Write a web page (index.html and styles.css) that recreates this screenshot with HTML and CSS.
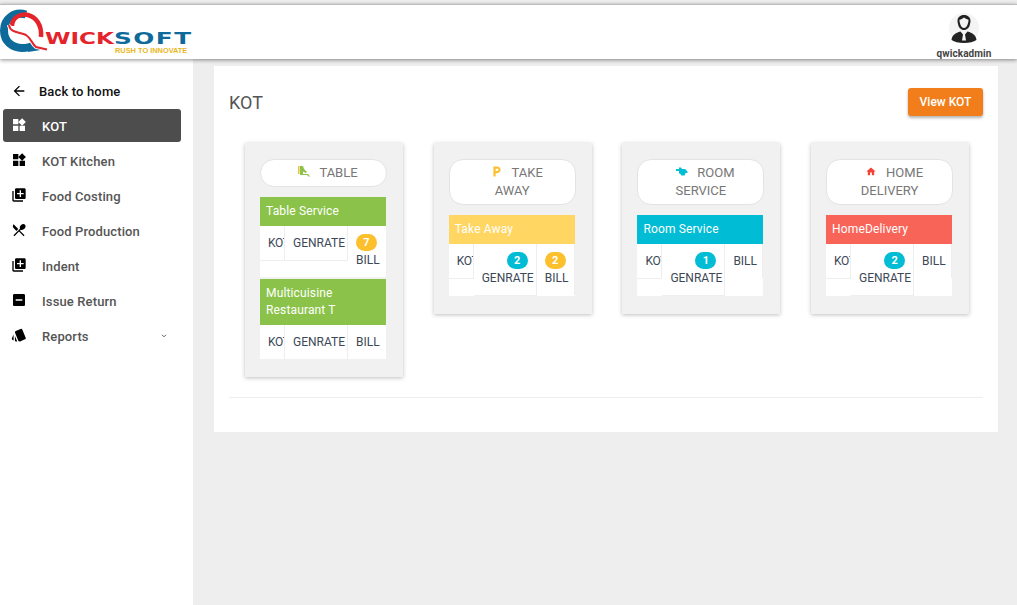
FILE: index.html
```html
<!DOCTYPE html>
<html lang="en">
<head>
<meta charset="utf-8">
<title>KOT</title>
<link rel="stylesheet" href="styles.css">
</head>
<body>
<header class="topbar">
  <div class="logo">
    <svg class="logo-q" viewBox="0 5 50 50" aria-hidden="true">
      <path d="M26 14.500C14 11 4 19 4 30.500C4 42 13 48 22 48C27 48 31 47 34 45" fill="none" stroke="#0e6a9a" stroke-width="8"/>
      <path d="M30 44L47 49L28 52z" fill="#0e6a9a"/>
      <path d="M12 26C12 18 20 13 28 15C36 17 42 25 41 37" fill="none" stroke="#e5232b" stroke-width="4.500"/>
      <path d="M9 25C10 33 20 32 26 35C31 38 32 44 36 47L47 49.500" fill="none" stroke="#fff" stroke-width="4"/>
      <path d="M9 25C10 33 20 32 26 35C31 38 32 44 36 47L47 49.500" fill="none" stroke="#e5232b" stroke-width="2"/>
    </svg>
    <div class="logo-words">
      <div class="logo-name"><span class="logo-wick">WICK</span><span class="logo-soft">SOFT</span></div>
      <div class="logo-tag">RUSH TO INNOVATE</div>
    </div>
  </div>
  <div class="user">
    <svg class="avatar" viewBox="0 0 30 30" aria-hidden="true">
      <circle cx="15" cy="15" r="15" fill="#f4f4f4"/>
      <path d="M15 2c-4 0-6.500 2.500-6.500 6 0 1 .2 2 .5 3 .5 3.500 3 6 6 6s5.500-2.500 6-6c.3-1 .5-2 .5-3 0-3.500-2.500-6-6.500-6zm0 2.500c2 1.500 3.500 2 4.500 2.200.1 2.800-1.500 8.300-4.500 8.300s-4.600-5.500-4.500-8.300c1.500-.2 3-1 4.500-2.200z" fill="#222"/>
      <path d="M2.500 27c.5-5 4-7 9-8.500l2.500 3-1 6h4l-1-6 2.500-3c5 1.500 8.500 3.500 9 8.500-3 2-7 3-12.500 3S5.500 29 2.500 27z" fill="#222"/>
    </svg>
    <div class="user-name">qwickadmin</div>
  </div>
</header>

<div class="layout">
  <aside class="sidebar">
    <a class="back">
      <svg class="ico" viewBox="0 0 24 24"><path d="M20 11H7.830l5.590-5.590L12 4l-8 8 8 8 1.410-1.410L7.830 13H20v-2z"/></svg>
      <span>Back to home</span>
    </a>
    <nav class="menu">
      <a class="item active">
        <svg class="ico" viewBox="0 0 24 24"><path d="M13 13v8h8v-8h-8zM3 21h8v-8H3v8zM3 3v8h8V3H3zm13.660-1.310L11 7.340 16.660 13l5.660-5.660-5.660-5.650z"/></svg>
        <span>KOT</span>
      </a>
      <a class="item">
        <svg class="ico" viewBox="0 0 24 24"><path d="M13 13v8h8v-8h-8zM3 21h8v-8H3v8zM3 3v8h8V3H3zm13.660-1.310L11 7.340 16.660 13l5.660-5.660-5.660-5.650z"/></svg>
        <span>KOT Kitchen</span>
      </a>
      <a class="item">
        <svg class="ico" viewBox="0 0 24 24"><path d="M4 6H2v14c0 1.100.9 2 2 2h14v-2H4V6zm16-4H8c-1.100 0-2 .9-2 2v12c0 1.100.9 2 2 2h12c1.100 0 2-.9 2-2V4c0-1.100-.9-2-2-2zm-1 9h-4v4h-2v-4H9V9h4V5h2v4h4v2z"/></svg>
        <span>Food Costing</span>
      </a>
      <a class="item">
        <svg class="ico" viewBox="0 0 24 24"><path d="M8.100 13.340l2.830-2.830L3.910 3.500c-1.560 1.560-1.560 4.090 0 5.660l4.190 4.180zm6.780-1.810c1.530.71 3.680.21 5.270-1.380 1.910-1.910 2.280-4.650.81-6.120-1.460-1.460-4.200-1.100-6.120.81-1.590 1.590-2.090 3.740-1.380 5.270L3.700 19.870l1.410 1.410L12 14.410l6.880 6.880 1.410-1.410L13.410 13l1.470-1.470z"/></svg>
        <span>Food Production</span>
      </a>
      <a class="item">
        <svg class="ico" viewBox="0 0 24 24"><path d="M4 6H2v14c0 1.100.9 2 2 2h14v-2H4V6zm16-4H8c-1.100 0-2 .9-2 2v12c0 1.100.9 2 2 2h12c1.100 0 2-.9 2-2V4c0-1.100-.9-2-2-2zm-1 9h-4v4h-2v-4H9V9h4V5h2v4h4v2z"/></svg>
        <span>Indent</span>
      </a>
      <a class="item">
        <svg class="ico" viewBox="0 0 24 24"><path d="M19 3H5c-1.100 0-2 .9-2 2v14c0 1.100.9 2 2 2h14c1.100 0 2-.9 2-2V5c0-1.100-.9-2-2-2zm-2 10H7v-2h10v2z"/></svg>
        <span>Issue Return</span>
      </a>
      <a class="item">
        <svg class="ico" viewBox="0 0 24 24"><path d="M2.530 19.650l1.340.56v-9.030l-2.430 5.860c-.41 1.020.08 2.190 1.090 2.610zm19.500-3.700L17.070 3.980c-.31-.75-1.040-1.210-1.810-1.230-.26 0-.53.04-.79.15L7.100 5.950c-.75.31-1.210 1.030-1.230 1.800-.01.27.04.54.15.8l4.960 11.970c.31.76 1.050 1.220 1.830 1.230.26 0 .52-.05.77-.15l7.360-3.050c1.020-.42 1.510-1.590 1.090-2.600zM5.880 19.750c0 1.100.9 2 2 2h1.450l-3.450-8.340v6.340z"/></svg>
        <span>Reports</span>
        <svg class="caret" viewBox="0 0 10 10"><path d="M2.500 3.500L5 6l2.500-2.500" fill="none" stroke="#555" stroke-width="1.200"/></svg>
      </a>
    </nav>
  </aside>

  <main class="content">
    <section class="panel">
      <div class="panel-head">
        <h1 class="title">KOT</h1>
        <button class="view-btn">View KOT</button>
      </div>
      <div class="cards">

        <article class="card">
          <div class="pill">
            <svg class="pill-ico" viewBox="0 0 12 11"><path d="M0 0h1.500v8H0z" fill="#e8c23a"/><path d="M2 0h3l1 3 3 3-1.200 1L5 5.500V8h5l2 2.500h-1.500L9 9H2z" fill="#8bc34a"/></svg>TABLE
          </div>
          <div class="service">
            <div class="service-head bg-green">Table Service</div>
            <div class="cells">
              <div class="cell kot">KOT</div>
              <div class="cell gen">GENRATE</div>
              <div class="cell bill plain"><span class="badge yellow">7</span>BILL</div>
            </div>
          </div>
          <div class="service">
            <div class="service-head bg-green">Multicuisine Restaurant T</div>
            <div class="cells">
              <div class="cell kot flat">KOT</div>
              <div class="cell gen flat">GENRATE</div>
              <div class="cell bill plain">BILL</div>
            </div>
          </div>
        </article>

        <article class="card">
          <div class="pill">
            <svg class="pill-ico" viewBox="4 2 17 20"><path fill="#fcc02d" d="M13 3H6v18h4v-6h3c3.310 0 6-2.690 6-6s-2.690-6-6-6zm.2 8H10V7h3.200c1.100 0 2 .9 2 2s-.9 2-2 2z"/></svg>TAKE AWAY
          </div>
          <div class="service">
            <div class="service-head bg-yellow">Take Away</div>
            <div class="cells">
              <div class="cell kot">KOT</div>
              <div class="cell gen"><span class="badge teal shift">2</span>GENRATE</div>
              <div class="cell bill"><span class="badge yellow">2</span>BILL</div>
            </div>
          </div>
        </article>

        <article class="card">
          <div class="pill">
            <svg class="pill-ico" viewBox="0 0 12 9"><path fill="#00bcd4" d="M0 2h3v2H0zM3 .5h2L6 2h3l2.500 2.500V6H9.500L8.500 8.500h-3L4 6.500H3z"/></svg>ROOM SERVICE
          </div>
          <div class="service">
            <div class="service-head bg-teal">Room Service</div>
            <div class="cells">
              <div class="cell kot">KOT</div>
              <div class="cell gen"><span class="badge teal shift">1</span>GENRATE</div>
              <div class="cell bill">BILL</div>
            </div>
          </div>
        </article>

        <article class="card">
          <div class="pill">
            <svg class="pill-ico" viewBox="0 0 24 24"><path fill="#f44336" d="M10 20v-6h4v6h5v-8h3L12 3 2 12h3v8z"/></svg>HOME DELIVERY
          </div>
          <div class="service">
            <div class="service-head bg-red">HomeDelivery</div>
            <div class="cells">
              <div class="cell kot">KOT</div>
              <div class="cell gen"><span class="badge teal shift">2</span>GENRATE</div>
              <div class="cell bill">BILL</div>
            </div>
          </div>
        </article>

      </div>
      <hr class="rule">
    </section>
  </main>
</div>
</body>
</html>
```
FILE: styles.css
```css
* { box-sizing: border-box; }
html, body { margin: 0; height: 100%; overflow: hidden; }
body { font-family: Roboto, "Liberation Sans", sans-serif; background: #eee; color: #3c4858; font-size: 12px; }

.topbar {
  height: 55px;
  margin-top: 4px;
  border-top: 1px solid #bdbdbd;
  background: #fff;
  box-shadow: 0 1px 4px rgba(0,0,0,.45);
  display: flex;
  justify-content: space-between;
  position: relative;
  z-index: 2;
}
.logo { display: flex; align-items: flex-start; }
.logo-q { width: 50px; height: 50px; flex: none; }
.logo-words { margin-left: -5px; margin-top: 25px; }
.logo-name { display: flex; font-family: "DejaVu Sans", sans-serif; font-weight: 700; font-size: 16.500px; line-height: 17px; }
.logo-wick { color: #e5232b; width: 69px; display: block; transform: scaleX(1.400); transform-origin: left; }
.logo-soft { color: #0e6a9a; display: block; letter-spacing: 1px; transform: scaleX(1.500); transform-origin: left; }
.logo-tag { font-family: "Liberation Sans", sans-serif; font-weight: 700; font-size: 7.400px; line-height: 8px; color: #e8b71c; margin-left: 70px; white-space: nowrap; }

.user { width: 60px; margin-right: 23px; display: flex; flex-direction: column; align-items: center; padding-top: 8px; }
.avatar { width: 30px; height: 30px; flex: none; }
.user-name { font-size: 10px; line-height: 12px; font-weight: 700; color: #444; margin-top: 5px; letter-spacing: .1px; white-space: nowrap; }

.layout { display: flex; height: 546px; }
.sidebar { width: 193px; background: #fff; padding: 18px 12px 0 3px; flex: none; }
.ico { width: 16px; height: 16px; fill: #000; flex: none; margin-top: -3px; }
.back { display: flex; align-items: center; height: 29px; padding-left: 8px; font-size: 13px; font-weight: 500; letter-spacing: .15px; color: #111; margin-bottom: 3px; }
.back span { margin-left: 12px; }
.back .ico { margin-top: -2px; }
.menu { display: flex; flex-direction: column; gap: 2px; }
.item { display: flex; align-items: center; height: 33px; padding: 1px 0 0 8px; border-radius: 3px; font-size: 13px; font-weight: 500; letter-spacing: .13px; color: #555; }
.item span { margin-left: 15px; }
.item.active { background: #4d4d4d; color: #fff; }
.item.active .ico { fill: #fff; }
.caret { width: 8px; height: 8px; margin-left: auto; margin-right: 13px; }

.content { flex: 1; padding: 7px 19px 0 21px; min-width: 0; }
.panel { background: #fff; height: 366px; padding: 0 15px; }
.panel-head { display: flex; justify-content: space-between; align-items: flex-start; padding-top: 22px; height: 77px; }
.title { font-size: 18px; line-height: 30px; font-weight: 400; color: #555; margin: 0; }
.view-btn { width: 75px; height: 28px; background: #f17e1a; color: #fff; border: 0; border-radius: 3px; font: 500 12px Roboto, sans-serif; box-shadow: 0 2px 3px rgba(0,0,0,.3); padding: 0; }

.cards { display: grid; grid-template-columns: repeat(4, 188.700px); align-items: start; padding-left: 1px; height: 254px; margin-right: -10px; }
.card { width: 158px; margin-left: 15px; background: #f1f1f1; padding: 16px 15px 18px; box-shadow: 0 1px 4px rgba(0,0,0,.25); }
.pill { background: #fff; border: 1px solid #e3e3e3; border-radius: 14px; text-align: center; font-size: 13px; line-height: 18px; color: #777; padding: 4px 14px; margin-bottom: 10px; width: 127px; }
.pill-ico { width: 12px; height: 11px; margin: 0 9px 0 9px; vertical-align: 0; }

.service { margin-bottom: 2px; width: 126px; background: #fff; }
.service:last-child { margin-bottom: 0; }
.service-head { color: #fff; font-size: 12px; font-weight: 400; letter-spacing: .15px; line-height: 17px; padding: 6px; }
.bg-green { background: #8bc34a; }
.bg-yellow { background: #ffd662; }
.bg-teal { background: #00bcd4; }
.bg-red { background: #f96459; }
.cells { display: flex; align-items: flex-start; }
.cell { padding: 8px; line-height: 18px; border-right: 1px solid #eee; border-bottom: 1px solid #eee; flex: none; }
.kot { width: 25px; overflow: hidden; white-space: nowrap; letter-spacing: -.3px; }
.gen { width: 63px; }
.bill { width: 38px; padding-right: 0; border-bottom: 0; }
.plain { border-right: 0; }
.flat { border-bottom: 0; }
.badge { display: block; width: 21px; height: 17px; border-radius: 9px; color: #fff; font-size: 11px; line-height: 17px; font-weight: 700; text-align: center; }
.yellow { background: #fcc02d; }
.teal { background: #00bcd4; }
.shift { margin-left: 25px; }
.rule { border: 0; border-top: 1px solid #eee; margin: 0; }
```
